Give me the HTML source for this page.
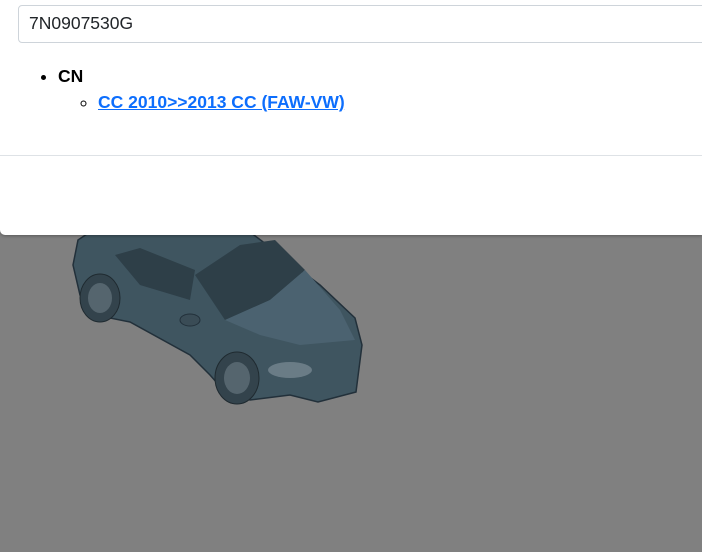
<!DOCTYPE html>
<html><head><style>
html,body{margin:0;padding:0;width:702px;height:552px;overflow:hidden;background:#808080;font-family:"Liberation Sans",Arial,sans-serif;}
.car{position:absolute;left:0;top:0}
.modal{position:absolute;left:0;top:0;width:702px;height:235px;background:#fff;border-bottom-left-radius:5px;box-shadow:0 1px 3px rgba(0,0,0,.3);}
.inp{position:absolute;left:18px;top:5px;width:700px;height:38px;border:1px solid #ced4da;border-radius:4px;box-sizing:border-box;font-size:17.5px;line-height:34px;padding-left:10px;color:#212529;}
ul{margin:0;padding:0}
.l1{position:absolute;left:40px;top:65px;font-size:17.5px;font-weight:bold;color:#000;list-style:disc;padding-left:18px;}
.l1 li{line-height:22px}
.l2{list-style:circle;padding-left:40px;margin-top:4px;}
.l2 a{color:#0d6efd;text-decoration:underline;}
.sep{position:absolute;left:0;top:155px;width:702px;height:1px;background:#dee2e6}
</style></head><body>
<svg class="car" width="702" height="552" viewBox="0 0 702 552">
<path d="M78,240 L90,232 L250,232 L320,285 L355,318 L362,345 L356,392 L318,402 L290,395 L250,400 L225,392 L210,375 L190,355 L130,322 L95,315 L80,295 L73,265 Z" fill="#3f5560" stroke="#22303a" stroke-width="1.5"/>
<path d="M195,275 L240,245 L275,240 L305,270 L270,300 L225,320 Z" fill="#2e3f48"/>
<path d="M225,320 L270,300 L305,270 L340,310 L355,340 L300,345 L260,335 Z" fill="#4b6270"/>
<path d="M115,255 L140,248 L195,270 L190,300 L140,285 Z" fill="#2e3f48"/>
<ellipse cx="100" cy="298" rx="20" ry="24" fill="#33434c" stroke="#1f2a30"/>
<ellipse cx="100" cy="298" rx="12" ry="15" fill="#55656e"/>
<ellipse cx="237" cy="378" rx="22" ry="26" fill="#33434c" stroke="#1f2a30"/>
<ellipse cx="237" cy="378" rx="13" ry="16" fill="#55656e"/>
<ellipse cx="290" cy="370" rx="22" ry="8" fill="#6a7c86"/>
<ellipse cx="190" cy="320" rx="10" ry="6" fill="#3a4c56" stroke="#22303a"/>
</svg>
<div class="modal">
<div class="inp">7N0907530G</div>
<ul class="l1"><li>CN
<ul class="l2"><li><a>CC 2010&gt;&gt;2013 CC (FAW-VW)</a></li></ul></li></ul>
<div class="sep"></div>
</div>
</body></html>
